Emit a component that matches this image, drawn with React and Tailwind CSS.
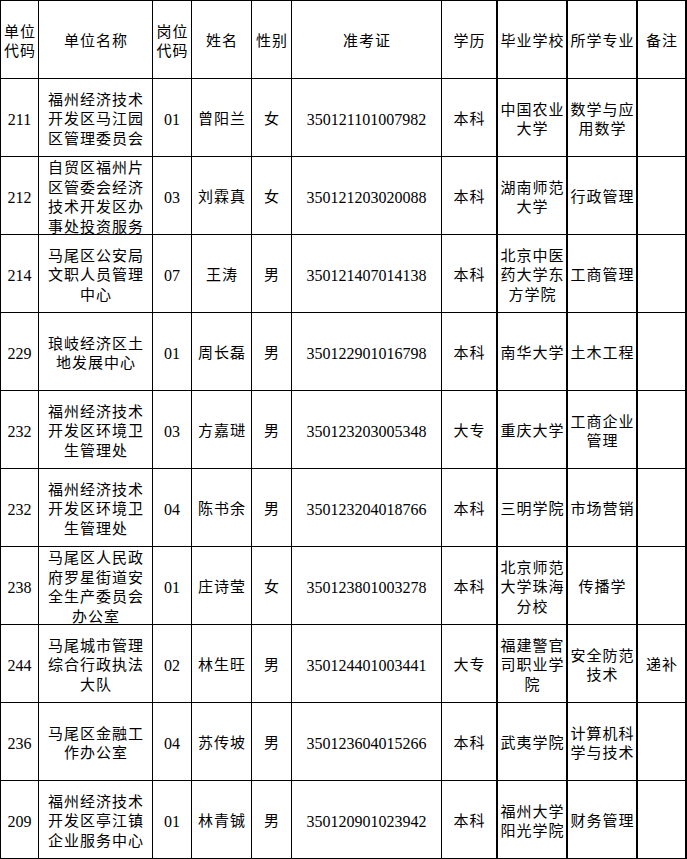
const headers = [
  "单位\n代码",
  "单位名称",
  "岗位\n代码",
  "姓名",
  "性别",
  "准考证",
  "学历",
  "毕业学校",
  "所学专业",
  "备注",
];

const rows = [
  ["211", "福州经济技术\n开发区马江园\n区管理委员会", "01", "曾阳兰", "女", "350121101007982", "本科", "中国农业\n大学", "数学与应\n用数学", ""],
  ["212", "自贸区福州片\n区管委会经济\n技术开发区办\n事处投资服务", "03", "刘霖真", "女", "350121203020088", "本科", "湖南师范\n大学", "行政管理", ""],
  ["214", "马尾区公安局\n文职人员管理\n中心", "07", "王涛", "男", "350121407014138", "本科", "北京中医\n药大学东\n方学院", "工商管理", ""],
  ["229", "琅岐经济区土\n地发展中心", "01", "周长磊", "男", "350122901016798", "本科", "南华大学", "土木工程", ""],
  ["232", "福州经济技术\n开发区环境卫\n生管理处", "03", "方嘉琎", "男", "350123203005348", "大专", "重庆大学", "工商企业\n管理", ""],
  ["232", "福州经济技术\n开发区环境卫\n生管理处", "04", "陈书余", "男", "350123204018766", "本科", "三明学院", "市场营销", ""],
  ["238", "马尾区人民政\n府罗星街道安\n全生产委员会\n办公室", "01", "庄诗莹", "女", "350123801003278", "本科", "北京师范\n大学珠海\n分校", "传播学", ""],
  ["244", "马尾城市管理\n综合行政执法\n大队", "02", "林生旺", "男", "350124401003441", "大专", "福建警官\n司职业学\n院", "安全防范\n技术", "递补"],
  ["236", "马尾区金融工\n作办公室", "04", "苏传坡", "男", "350123604015266", "本科", "武夷学院", "计算机科\n学与技术", ""],
  ["209", "福州经济技术\n开发区亭江镇\n企业服务中心", "01", "林青铖", "男", "350120901023942", "本科", "福州大学\n阳光学院", "财务管理", ""],
];

function Cell({ text, col }) {
  const isNum = /^[0-9]+$/.test(text);
  const thick = col >= 6 ? "border-r-2" : "border-r";
  return (
    <div
      className={`h-[78px] ${thick} border-b border-black flex items-center justify-center text-center pt-[5px] overflow-visible whitespace-pre-line ${
        isNum ? "text-[16px]" : "text-[15px] tracking-[1px] pl-[1px]"
      } leading-[19.5px]`}
    >
      {text}
    </div>
  );
}

export default function App() {
  return (
    <div className="w-[687px] h-[859px] bg-white text-black font-['Liberation_Serif','Noto_Sans_CJK_SC',serif]">
      <div className="grid grid-cols-[38px_114px_39px_60px_40px_150px_56px_70px_70px_49px] border-l border-t border-black w-[687px]">
        {headers.map((h, i) => (
          <Cell key={"h" + i} text={h} col={i} />
        ))}
        {rows.map((r, ri) =>
          r.map((c, ci) => <Cell key={ri + "-" + ci} text={c} col={ci} />)
        )}
      </div>
    </div>
  );
}
